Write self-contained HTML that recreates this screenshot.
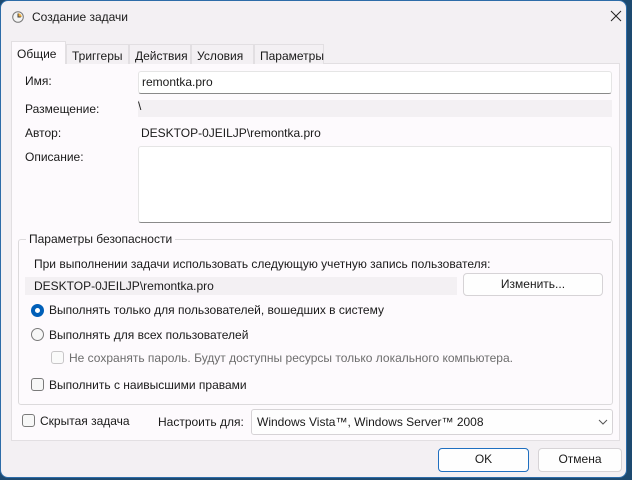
<!DOCTYPE html>
<html><head><meta charset="utf-8"><style>
*{box-sizing:border-box;margin:0;padding:0}
body{width:632px;height:480px;background:#1d4a70;overflow:hidden;font-family:"Liberation Sans",sans-serif;font-size:12px;color:#1a1a1a}
.win{position:absolute;left:0;top:0;width:627px;height:478px;background:#f3f0f3;border:1px solid #2d6ca8;border-radius:8px;overflow:hidden}
.a{position:absolute;white-space:nowrap}
.tab{position:absolute;top:43px;height:20px;border:1px solid #e2dfe2;border-bottom:none;background:#f3f0f3;padding:4px 0 0 5px;font-size:12px}
.sel{top:40px;height:23px;background:#fdfafd;padding-top:5px;z-index:2}
.panel{position:absolute;left:10px;top:62px;width:609px;height:378px;background:#fdfafd;border:1px solid #e2dfe2}
.inp{position:absolute;background:#fff;border:1px solid #e5e5e5;border-bottom:1px solid #8a8a8a;border-radius:3px}
.gray{position:absolute;background:#f3f0f3}
.btn{position:absolute;background:#fefefe;border:1px solid #d6d3d6;border-radius:4px;text-align:center;line-height:20px}
.rad{position:absolute;width:13px;height:13px;border-radius:50%;border:1px solid #7a7a7a;background:#f7f7f7}
.chk{position:absolute;width:13px;height:13px;border-radius:3px;border:1px solid #7a7a7a;background:#f7f7f7}
</style></head><body>
<div class="win">
<svg class="a" style="left:11px;top:10px" width="12" height="12" viewBox="0 0 12 12"><circle cx="6" cy="6" r="5.3" fill="#f4f4f4" stroke="#777" stroke-width="1"/><path d="M6 6V2.2A3.8 3.8 0 0 1 9.8 6Z" fill="#f0b040"/><path d="M6 2.5V6H8.8" stroke="#444" stroke-width="1" fill="none"/></svg>
<div class="a" style="left:31px;top:9px;font-size:12px">Создание задачи</div>
<svg class="a" style="left:609px;top:9px" width="12" height="12" viewBox="0 0 12 12"><path d="M1 1L11 11M11 1L1 11" stroke="#222" stroke-width="1"/></svg>

<div class="panel"></div>
<div class="tab sel" style="left:10px;width:55px">Общие</div>
<div class="tab" style="left:65px;width:63px">Триггеры</div>
<div class="tab" style="left:128px;width:62px">Действия</div>
<div class="tab" style="left:190px;width:63px">Условия</div>
<div class="tab" style="left:253px;width:70px">Параметры</div>

<div class="a" style="left:24px;top:73px">Имя:</div>
<div class="inp" style="left:137px;top:70px;width:474px;height:23px"></div>
<div class="a" style="left:141px;top:74px">remontka.pro</div>
<div class="a" style="left:24px;top:101px">Размещение:</div>
<div class="gray" style="left:137px;top:99px;width:474px;height:17px"></div>
<div class="a" style="left:137px;top:98px">\</div>
<div class="a" style="left:24px;top:125px">Автор:</div>
<div class="a" style="left:140px;top:125px">DESKTOP-0JEILJP\remontka.pro</div>
<div class="a" style="left:24px;top:149px">Описание:</div>
<div class="inp" style="left:137px;top:145px;width:474px;height:77px"></div>

<div class="a" style="left:17px;top:238px;width:595px;height:166px;border:1px solid #dcdadc;border-radius:3px"></div>
<div class="a" style="left:25px;top:231px;background:#fdfafd;padding:0 3px">Параметры безопасности</div>
<div class="a" style="left:33px;top:256px">При выполнении задачи использовать следующую учетную запись пользователя:</div>
<div class="gray" style="left:24px;top:276px;width:432px;height:18px"></div>
<div class="a" style="left:33px;top:278px">DESKTOP-0JEILJP\remontka.pro</div>
<div class="btn" style="left:462px;top:272px;width:140px;height:23px">Изменить...</div>

<div class="rad" style="left:30px;top:303px;border:4px solid #005fb8;background:#fff"></div>
<div class="a" style="left:48px;top:302px">Выполнять только для пользователей, вошедших в систему</div>
<div class="rad" style="left:30px;top:327px"></div>
<div class="a" style="left:48px;top:327px">Выполнять для всех пользователей</div>
<div class="chk" style="left:50px;top:350px;border-color:#c8c6c8;background:#fafafa"></div>
<div class="a" style="left:68px;top:350px;color:#6d6d6d">Не сохранять пароль. Будут доступны ресурсы только локального компьютера.</div>
<div class="chk" style="left:30px;top:377px"></div>
<div class="a" style="left:48px;top:377px">Выполнить с наивысшими правами</div>

<div class="chk" style="left:21px;top:413px"></div>
<div class="a" style="left:39px;top:413px">Скрытая задача</div>
<div class="a" style="left:157px;top:414px">Настроить для:</div>
<div class="btn" style="left:250px;top:408px;width:362px;height:26px;text-align:left;padding:5px 0 0 5px;line-height:14px;border-radius:3px">Windows Vista™, Windows Server™ 2008</div>
<svg class="a" style="left:597px;top:418px" width="10" height="6" viewBox="0 0 10 6"><path d="M1 1L5 5L9 1" stroke="#555" fill="none" stroke-width="1"/></svg>

<div class="btn" style="left:437px;top:447px;width:91px;height:24px;border:1px solid #1f6fc0">OK</div>
<div class="btn" style="left:537px;top:447px;width:84px;height:24px">Отмена</div>
</div>
</body></html>
